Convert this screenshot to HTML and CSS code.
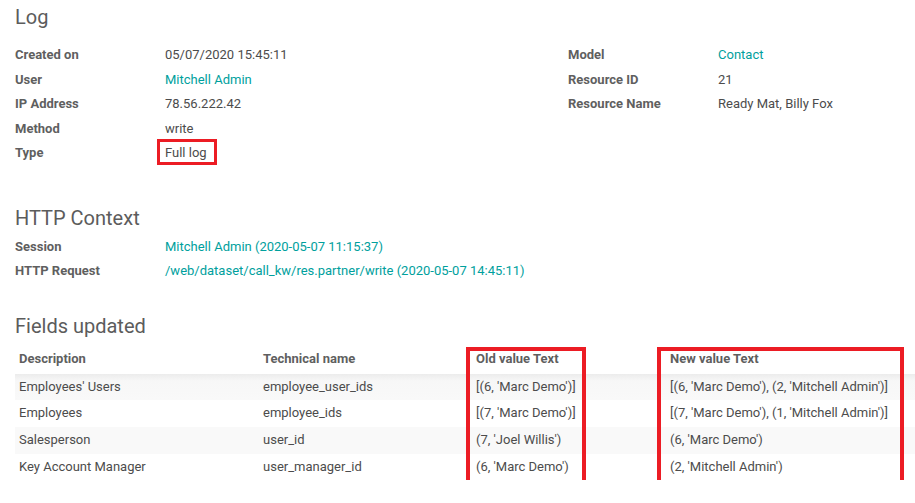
FILE: index.html
```html
<!DOCTYPE html>
<html lang="en">
<head>
<meta charset="utf-8">
<title>Log</title>
<link rel="stylesheet" href="styles.css">
</head>
<body>
<main class="page">
  <section class="sec sec-log">
    <h2 class="sec-title">Log</h2>
    <div class="info-grid">
      <div class="info-col">
        <div class="info-row"><span class="lbl">Created on</span><span class="val">05/07/2020 15:45:11</span></div>
        <div class="info-row"><span class="lbl">User</span><span class="val link">Mitchell Admin</span></div>
        <div class="info-row"><span class="lbl">IP Address</span><span class="val">78.56.222.42</span></div>
        <div class="info-row"><span class="lbl">Method</span><span class="val">write</span></div>
        <div class="info-row"><span class="lbl">Type</span><span class="val marked">Full log<span class="mark mark-type"></span></span></div>
      </div>
      <div class="info-col">
        <div class="info-row"><span class="lbl">Model</span><span class="val link">Contact</span></div>
        <div class="info-row"><span class="lbl">Resource ID</span><span class="val">21</span></div>
        <div class="info-row"><span class="lbl">Resource Name</span><span class="val">Ready Mat, Billy Fox</span></div>
      </div>
    </div>
  </section>

  <section class="sec sec-http">
    <h2 class="sec-title">HTTP Context</h2>
    <div class="info-col http-col">
      <div class="info-row"><span class="lbl">Session</span><span class="val link">Mitchell Admin (2020-05-07 11:15:37)</span></div>
      <div class="info-row"><span class="lbl">HTTP Request</span><span class="val link">/web/dataset/call_kw/res.partner/write (2020-05-07 14:45:11)</span></div>
    </div>
  </section>

  <section class="sec sec-fields">
    <h2 class="sec-title">Fields updated</h2>
    <div class="table-wrap">
      <table class="fields">
        <thead>
          <tr><th class="c-desc">Description</th><th class="c-tech">Technical name</th><th class="c-old">Old value Text</th><th class="c-new">New value Text</th></tr>
        </thead>
        <tbody>
          <tr class="odd first"><td>Employees' Users</td><td>employee_user_ids</td><td>[(6, 'Marc Demo')]</td><td>[(6, 'Marc Demo'), (2, 'Mitchell Admin')]</td></tr>
          <tr><td>Employees</td><td>employee_ids</td><td>[(7, 'Marc Demo')]</td><td>[(7, 'Marc Demo'), (1, 'Mitchell Admin')]</td></tr>
          <tr class="odd"><td>Salesperson</td><td>user_id</td><td>(7, 'Joel Willis')</td><td>(6, 'Marc Demo')</td></tr>
          <tr><td>Key Account Manager</td><td>user_manager_id</td><td>(6, 'Marc Demo')</td><td>(2, 'Mitchell Admin')</td></tr>
        </tbody>
      </table>
      <span class="mark mark-old"></span>
      <span class="mark mark-new"></span>
    </div>
  </section>
</main>
</body>
</html>
```

FILE: styles.css
```css
html, body {
  margin: 0;
  padding: 0;
  background: #ffffff;
}

body {
  font-family: Roboto, "Liberation Sans", sans-serif;
  font-size: 13px;
  color: #4c4c4c;
}

.page {
  padding: 0 0 0 15px;
  width: 900px;
}

.sec-title {
  margin: 0;
  font-size: 20px;
  line-height: 24px;
  font-weight: 400;
  color: #5c5c5c;
}

.sec-log .sec-title { margin-top: 5px; }
.sec-http .sec-title { margin-top: 40px; }
.sec-fields .sec-title { margin-top: 30px; }

.info-grid {
  margin-top: 14px;
  display: grid;
  grid-template-columns: 553px 1fr;
}

.http-col { margin-top: 5px; }

.info-row {
  display: flex;
  height: 24.5px;
  line-height: 24.5px;
  white-space: nowrap;
}

.lbl {
  width: 150px;
  flex: none;
  font-weight: 700;
  color: #5f5f5f;
}

.val { color: #4c4c4c; }
.val.link { color: #00a09d; }

.marked { position: relative; }

.mark {
  position: absolute;
  border: 3px solid #ec1c24;
  box-sizing: border-box;
  pointer-events: none;
}

.mark-type {
  left: -8px;
  top: -2px;
  width: 60px;
  height: 26px;
}

.table-wrap {
  position: relative;
  margin-top: 8px;
}

.fields {
  width: 900px;
  border-collapse: collapse;
  table-layout: fixed;
}

.fields th,
.fields td {
  box-sizing: border-box;
  height: 26.7px;
  padding: 0 0 0 4px;
  text-align: left;
  white-space: nowrap;
  line-height: 26.7px;
  vertical-align: middle;
}

.fields th {
  height: 28px;
  line-height: 26.6px;
  font-weight: 700;
  color: #5f5f5f;
}

.c-desc { width: 244px; }
.c-tech { width: 213px; }
.c-old { width: 194px; }

.fields tr.odd td { background: #f9f9f9; }
.fields tr.first td {
  background: linear-gradient(#ececec 0, #f7f7f7 7px, #f9f9f9 100%);
}

.mark-old {
  left: 451px;
  top: 1px;
  width: 120px;
  height: 142px;
  border-width: 4px;
}

.mark-new {
  left: 642px;
  top: 1px;
  width: 247px;
  height: 142px;
  border-width: 4px;
}
```
